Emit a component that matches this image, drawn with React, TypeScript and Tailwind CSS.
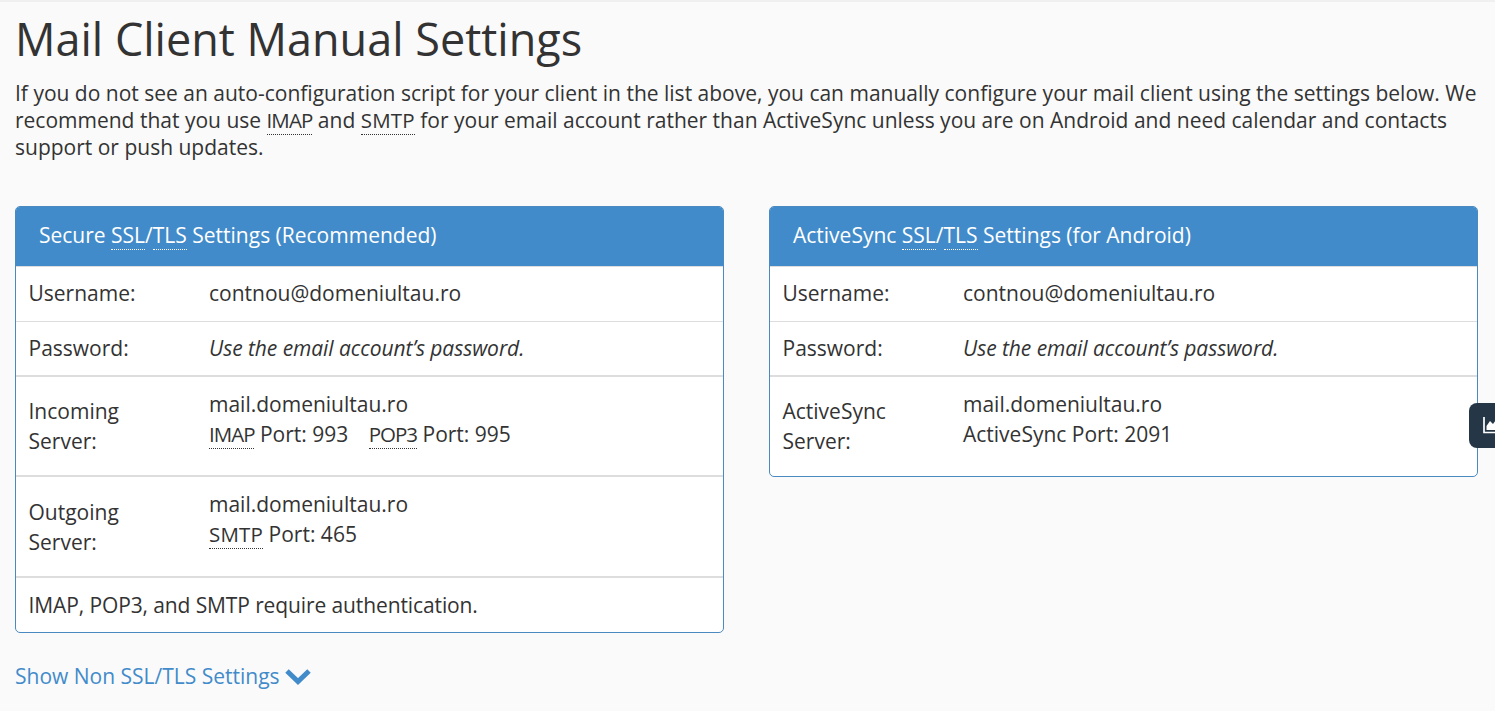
import React from "react";

const Abbr = ({ children, t }: { children: React.ReactNode; t: string }) => (
  <abbr className={`no-underline border-b border-dotted border-[#333] text-[20.5px] leading-none ${t}`}>{children}</abbr>
);

const Row = ({ label, children, h, thick }: { label: React.ReactNode; children: React.ReactNode; h: string; thick?: boolean }) => (
  <div className={`flex border-t border-[#dddddd] ${h} ${thick ? "border-t-2" : ""}`}>
    <div className="w-[193px] shrink-0 pl-[12.5px] pr-[30px]">{label}</div>
    <div className="flex-1">{children}</div>
  </div>
);

const Panel = ({ title, children }: { title: React.ReactNode; children: React.ReactNode }) => (
  <div className="border border-[#4a8ac0] rounded-[5px] bg-white overflow-hidden">
    <div className="bg-[#428bca] text-white h-[59px] flex items-center pl-[23px] pb-[2px] text-[21px]">{title}</div>
    {children}
  </div>
);

const HeadAbbr = ({ children }: { children: React.ReactNode }) => (
  <abbr className="no-underline border-b border-dotted border-white leading-none">{children}</abbr>
);

export default function App() {
  return (
    <div className="relative h-[711px] overflow-hidden bg-[#fafafa] text-[#333333] text-[21px] leading-[27px] font-['Open_Sans',sans-serif] pl-[15px] pr-[17px]">
      <div className="absolute top-0 left-0 right-0 h-[2px] bg-[#f0f0f0]" />
      <h1 className="text-[45px] leading-[50px] font-normal pt-[14px]">Mail Client Manual Settings</h1>
      <p className="mt-[16px]">
        If you do not see an auto-configuration script for your client in the list above, you can manually configure your mail client using the settings below. We recommend that you use <Abbr t="tracking-[-0.9px]">IMAP</Abbr> and <Abbr t="tracking-[0.2px]">SMTP</Abbr> for your email account rather than ActiveSync unless you are on Android and need calendar and contacts support or push updates.
      </p>
      <div className="grid grid-cols-2 gap-[45px] items-start mt-[45px]">
        <Panel title={<span>Secure <HeadAbbr>SSL</HeadAbbr>/<HeadAbbr>TLS</HeadAbbr> Settings (Recommended)</span>}>
          <Row label="Username:" h="h-[55px] pt-[13px]">contnou@domeniultau.ro</Row>
          <Row label="Password:" h="h-[54px] pt-[13px]"><em className="tracking-[-0.06px]">Use the email account’s password.</em></Row>
          <Row label={<div className="pt-[7px] leading-[30px]">Incoming Server:</div>} h="h-[100px] pt-[12px]" thick>
            <div className="leading-[30px]">mail.domeniultau.ro<br /><Abbr t="tracking-[-1px]">IMAP</Abbr> Port: 993 <span className="ml-[15px]"><Abbr t="tracking-[-1px]">POP3</Abbr> Port: 995</span></div>
          </Row>
          <Row label={<div className="pt-[8px] leading-[30px]">Outgoing Server:</div>} h="h-[101px] pt-[12px]" thick>
            <div className="leading-[30px]">mail.domeniultau.ro<br /><Abbr t="tracking-[0.2px]">SMTP</Abbr> Port: 465</div>
          </Row>
          <div className="border-t-2 border-[#dddddd] h-[56px] pl-[12.5px] pt-[14px] tracking-[-0.11px]">IMAP, POP3, and SMTP require authentication.</div>
        </Panel>
        <Panel title={<span>ActiveSync <HeadAbbr>SSL</HeadAbbr>/<HeadAbbr>TLS</HeadAbbr> Settings (for Android)</span>}>
          <Row label="Username:" h="h-[55px] pt-[13px]">contnou@domeniultau.ro</Row>
          <Row label="Password:" h="h-[54px] pt-[13px]"><em className="tracking-[-0.06px]">Use the email account’s password.</em></Row>
          <Row label={<div className="pt-[7px] leading-[30px]">ActiveSync Server:</div>} h="h-[101px] pt-[12px]" thick>
            <div className="leading-[30px]">mail.domeniultau.ro<br />ActiveSync Port: 2091</div>
          </Row>
        </Panel>
      </div>
      <a className="flex items-center gap-[5px] mt-[30px] text-[#428bca]">
        Show Non SSL/TLS Settings
        <svg width="26" height="18" viewBox="0 0 26 18" fill="none" stroke="#428bca" strokeWidth="5"><path d="M2 3 L13 13.5 L24 3" /></svg>
      </a>
      <div className="absolute left-[1469px] top-[403px] w-[30px] h-[45px] bg-[#253746] rounded-l-[8px] flex items-center pl-[14px]">
        <svg width="17" height="17" viewBox="0 0 17 17" fill="none" className="shrink-0">
          <path d="M1 0V15.5H17" stroke="#fff" strokeWidth="1.7" />
          <path d="M3.5 9L7 4L10 7L13 3L17 6V13H3.5Z" fill="#fff" />
        </svg>
      </div>
    </div>
  );
}
